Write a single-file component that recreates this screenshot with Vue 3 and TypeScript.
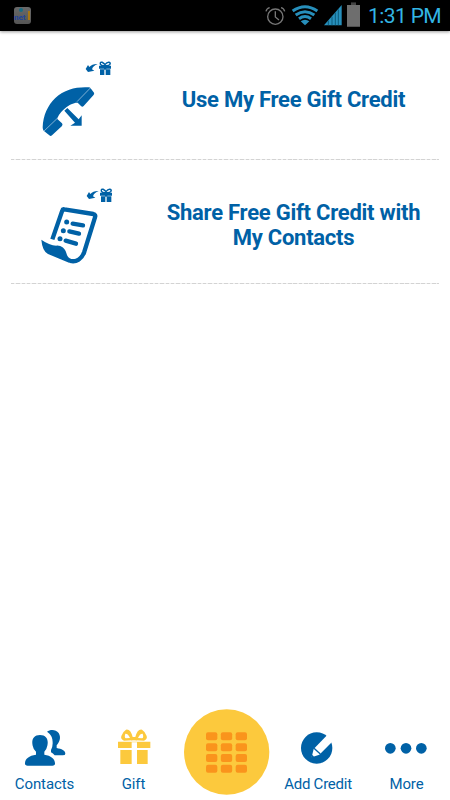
<script setup lang="ts">
interface Action {
  id: 'use' | 'share'
  lines: string[]
}

const actions: Action[] = [
  { id: 'use', lines: ['Use My Free Gift Credit'] },
  { id: 'share', lines: ['Share Free Gift Credit with', 'My Contacts'] },
]

const keys: { x: number; y: number }[] = []
for (const y of [97, 129.5, 162, 194.5]) {
  for (const x of [108, 152.5, 197]) keys.push({ x, y })
}
</script>

<template>
  <div class="screen">
    <header class="status">
      <span class="app-badge">
        <i class="badge-dot"></i>
        <b class="badge-name">net</b>
        <i class="badge-bar"></i>
      </span>
      <svg class="signals" viewBox="0 0 330 93" aria-hidden="true">
        <g fill="none" stroke="#777" stroke-width="4">
          <circle cx="61" cy="50" r="23" />
          <path d="M61 34V51L72 60" />
          <path d="M33 34Q35 25 44 23M78 23Q87 25 89 34" />
        </g>
        <g fill="none" stroke="#278fbb" stroke-width="9">
          <path d="M113 33Q150 7 187 33" />
          <path d="M122 45Q150 25 178 45" />
          <path d="M132 56Q150 43 168 56" />
        </g>
        <path d="M137 64Q150 54 163 64L150 76Z" fill="#278fbb" />
        <path d="M207 76L260 15V76Z" fill="#278fbb" />
        <path d="M220 62V76M231 50V76M241 38V76M250 28V76" stroke="#07536f" stroke-width="2.5" />
        <path d="M288 8H303V15H315V80H276V15H288Z" fill="#6e6e6e" />
        <path d="M288 8H303V15H288Z" fill="#444" />
      </svg>
      <time class="clock">1:31 PM</time>
    </header>

    <main class="list">
      <button v-for="a in actions" :key="a.id" class="row" :class="a.id">
        <svg class="picture" viewBox="0 0 300 300" aria-hidden="true">
          <g v-if="a.id === 'use'" fill="#0061a6">
            <path d="M38 232C39 196 54 165 76 144C104 118 139 110 176 112Q180 112 183 116L192 128Q194 132 190 136L161 168Q157 172 153 168L143 158C123 156 87 184 82 207L96 220Q99 224 96 228L66 256Q62 260 58 256L41 242Q38 239 38 232Z" />
            <path d="M183 112L141 155M39 246L84 203" stroke="#fff" stroke-width="1.5" />
            <path d="M103 182L112 174L146 208L155 196V227H121L135 218Z" />
          </g>
          <g v-else>
            <path d="M67 178L97 91Q98 87 103 88L190 102Q198 104 195 112L163 215C155 238 139 247 121 243" fill="none" stroke="#0061a6" stroke-width="13" stroke-linejoin="round" />
            <path d="M34 179Q58 196 79 197C91 195 106 205 109 219Q112 233 124 237L147 238Q136 250 117 248L54 222Q37 213 34 179Z" fill="#0061a6" />
            <g stroke="#0061a6" stroke-width="13" stroke-linecap="round">
              <path d="M128 131L159 136M118 154L147 161M107 182L138 191" />
            </g>
            <g fill="#0061a6">
              <circle cx="110" cy="126" r="7.5" />
              <circle cx="100" cy="152" r="7.5" />
              <circle cx="90" cy="176" r="7.5" />
            </g>
          </g>
          <g fill="#0061a6" :transform="a.id === 'share' ? 'translate(3 -9)' : undefined">
            <path d="M167 57L174 45L178 51Q187 41 203 42Q189 47 186 58L193 62L174 66Z" />
            <path d="M207 47H223V56H207ZM227 47H243V56H227ZM210 58H223V75H210ZM227 58H241V75H227Z" />
            <path d="M223 47Q213 48 211 42Q210 35 217 37Q223 41 225 44Q231 36 237 37Q243 38 239 44Q236 48 227 47" fill="none" stroke="#0061a6" stroke-width="4.5" />
            <path d="M222 45H229V59H222Z" />
          </g>
        </svg>
        <span class="caption"><span v-for="line in a.lines" :key="line" class="line">{{ line }}</span></span>
      </button>
    </main>

    <nav class="tabs">
      <button class="tab">
        <svg class="glyph wide" viewBox="0 0 132 120" aria-hidden="true">
          <g fill="#0061a6">
            <path d="M72 11C82 3 99 4 107 15C115 28 110 42 101 52V60C116 63 127 67 127 77Q127 82 119 82H95Q90 76 84 73V66Q89 57 89 46C90 29 83 18 72 11Z" />
            <path d="M51 21C71 21 77 36 73 53Q71 64 64 71V80C84 83 95 92 96 105Q97 113 88 113H14Q5 113 6 105C7 92 18 83 39 80V71Q31 64 29 53C25 36 31 21 51 21Z" />
          </g>
        </svg>
        <span class="label">Contacts</span>
      </button>
      <button class="tab">
        <svg class="glyph" viewBox="0 0 120 120" aria-hidden="true">
          <g fill="#fcc93d">
            <path d="M12 41H109V60H12ZM19 66H101V108H19Z" />
            <path d="M51 27H69V37H51Z" />
            <path fill-rule="evenodd" d="M55 37L30 38Q19 33 22 24Q27 10 36 5Q50 2 57 30ZM34 17Q42 16 48 30L36 31Q30 29 34 17ZM65 37L90 38Q101 33 98 24Q93 10 84 5Q70 2 63 30ZM86 17Q78 16 72 30L84 31Q90 29 86 17Z" />
          </g>
          <path d="M53 43H69V60H53ZM53 66H69V108H53Z" fill="#fff" />
        </svg>
        <span class="label">Gift</span>
      </button>
      <button class="tab dial" aria-label="Keypad">
        <svg class="dial-glyph" viewBox="42 27 258 258" aria-hidden="true">
          <circle cx="170" cy="156" r="128" fill="#fcc93d" />
          <rect v-for="k in keys" :key="`${k.x}-${k.y}`" :x="k.x" :y="k.y" width="34" height="24" rx="6" fill="#fa941c" />
        </svg>
      </button>
      <button class="tab">
        <svg class="glyph" viewBox="0 0 120 120" aria-hidden="true">
          <circle cx="56" cy="60" r="47" fill="#0061a6" />
          <path d="M87 22L47 63L41 88L64 80L105 39L111 20Z" fill="#fff" />
          <path d="M48 61L67 78" stroke="#0061a6" stroke-width="4" />
          <path d="M40 89L48 86L43 80Z" fill="#0061a6" />
        </svg>
        <span class="label credit">Add Credit</span>
      </button>
      <button class="tab">
        <svg class="glyph wide" viewBox="0 0 132 120" aria-hidden="true">
          <g fill="#0061a6">
            <circle cx="16" cy="61" r="16" />
            <circle cx="63" cy="61" r="16" />
            <circle cx="109" cy="61" r="16" />
          </g>
        </svg>
        <span class="label">More</span>
      </button>
    </nav>
  </div>
</template>

<style>
body {
  margin: 0;
  background: #fff;
}
</style>

<style scoped>
.screen {
  width: 450px;
  height: 800px;
  display: flex;
  flex-direction: column;
  overflow: hidden;
  background: #fff;
  font-family: Roboto, "Liberation Sans", sans-serif;
  color: #0061a6;
}
button {
  border: 0;
  padding: 0;
  background: none;
  font: inherit;
  color: inherit;
}
.status {
  flex: none;
  height: 31px;
  display: flex;
  align-items: flex-start;
  background: #000;
  box-shadow: 0 1px 3px #999;
}
.app-badge {
  width: 17px;
  height: 17px;
  margin: 7px 0 0 14px;
  border-radius: 3px;
  background: linear-gradient(#696969, #555);
  display: grid;
  grid-template-columns: 14px 2px;
  grid-template-rows: 5px 10px;
  align-content: center;
}
.badge-dot {
  width: 4px;
  height: 4px;
  border-radius: 50%;
  background: #176d85;
  justify-self: center;
}
.badge-name {
  grid-row: 2;
  font-size: 8px;
  line-height: 9px;
  color: #21459b;
}
.badge-bar {
  grid-column: 2;
  grid-row: 1 / 3;
  width: 2px;
  height: 9px;
  margin-top: 3px;
  background: #a77713;
}
.signals {
  width: 110px;
  height: 31px;
  margin-left: 224px;
}
.clock {
  margin-left: 3px;
  font-size: 21px;
  line-height: 33px;
  letter-spacing: -0.6px;
  color: #33b5e5;
  white-space: nowrap;
}
.list {
  flex: 1;
  padding: 0 11px;
}
.row {
  width: 428px;
  height: 129px;
  display: grid;
  grid-template-columns: 119px 1fr;
  align-items: start;
  background: repeating-linear-gradient(90deg, #d3d3d3 0 3.5px, #f0f0f0 3.5px 5.33px) bottom / 100% 1px no-repeat;
}
.row.share {
  height: 124px;
}
.picture {
  width: 100px;
  height: 100px;
  margin: 19px 0 0 19px;
}
.share .picture {
  margin-top: 20px;
}
.caption {
  margin-top: 56px;
  padding-left: 18px;
  font-size: 22px;
  line-height: 25px;
  font-weight: 700;
  letter-spacing: -0.25px;
  text-align: center;
}
.share .caption {
  margin-top: 40px;
}
.line {
  display: block;
  white-space: nowrap;
}
.tabs {
  height: 92px;
  display: grid;
  grid-template-columns: 89px 89px 98px 84px 93px;
}
.tab {
  display: flex;
  flex-direction: column;
  align-items: center;
  padding-top: 20px;
}
.dial {
  padding-top: 1px;
}
.glyph {
  width: 40px;
  height: 40px;
}
.glyph.wide {
  width: 44px;
}
.dial-glyph {
  width: 86px;
  height: 86px;
}
.label {
  margin-top: 6px;
  font-size: 15px;
  line-height: 20px;
  letter-spacing: -0.1px;
  white-space: nowrap;
}
.label.credit {
  letter-spacing: -0.25px;
}
</style>
